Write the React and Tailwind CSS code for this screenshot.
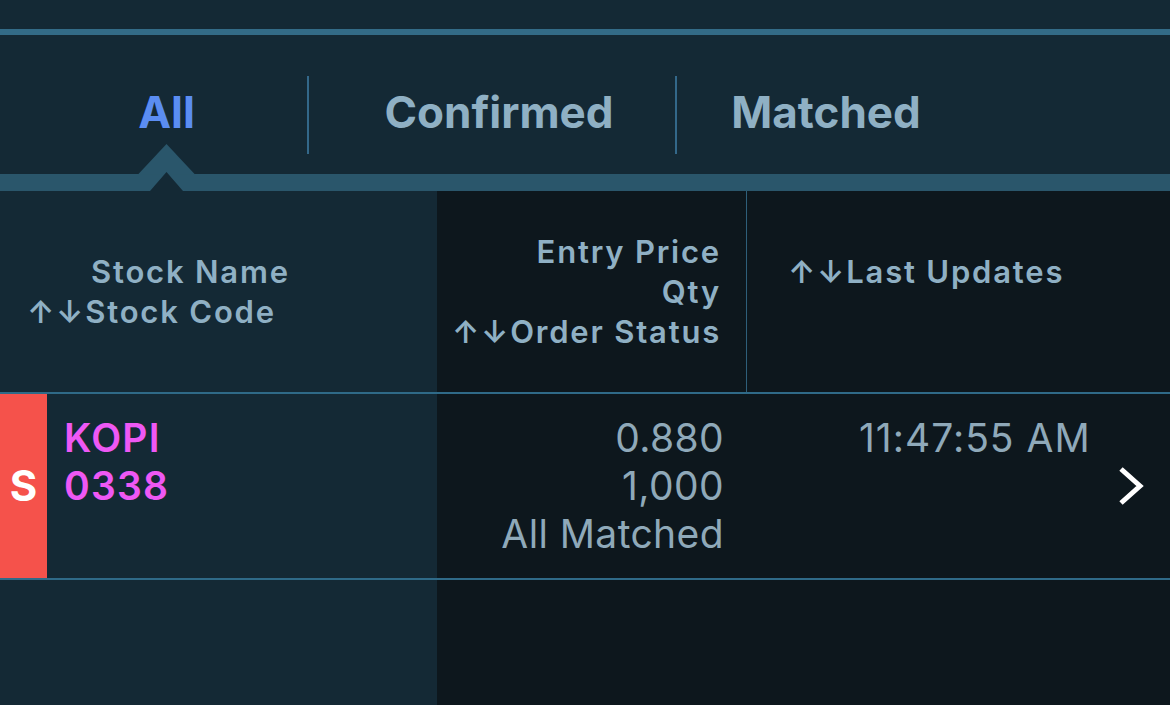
// Order list screen: tabs, column header, one order row
const font = { fontFamily: 'Inter, "Liberation Sans", "DejaVu Sans", sans-serif' };

const Tab = ({ label, active, className }) => (
  <div className={`flex justify-center pt-[55px] ${className}`}>
    <span
      className={`text-[44px] font-bold leading-[44px] ${
        active ? 'text-[#5b8df2]' : 'text-[#8fb0c4]'
      }`}
    >
      {label}
    </span>
  </div>
);

const Divider = () => <div className="mt-[41px] h-[78px] w-[2px] bg-[#33688a]" />;

export default function App() {
  return (
    <div className="w-[1170px] h-[705px] overflow-hidden bg-[#142935]" style={font}>
      <div className="h-[29px]" />
      <div className="h-[6px] bg-[#336b87]" />

      {/* Tabs */}
      <div className="flex h-[139px]">
        <Tab label="All" active className="w-[307px] pl-[26px]" />
        <Divider />
        <Tab label="Confirmed" className="w-[366px] pl-[14px]" />
        <Divider />
        <Tab label="Matched" className="w-[298px]" />
      </div>

      {/* Underline bar with notch */}
      <div className="relative h-[17px] bg-[#2a566b]">
        <svg
          className="absolute left-[130px] top-[-30px]"
          width="74"
          height="47"
          viewBox="130 144 74 47"
        >
          <polygon points="138,174.5 166.5,144 195,174.5" fill="#2a566b" />
          <polygon points="150,191 166.5,172 183,191" fill="#142935" />
        </svg>
      </div>

      {/* Header row */}
      <div className="flex h-[201px] text-[31px] font-semibold leading-[40px] text-[#8fb0c4] tracking-[1.8px]">
        <div className="w-[437px] flex flex-col justify-center">
          <div className="pl-[91px]">Stock Name</div>
          <div className="pl-[27px]">↑↓Stock Code</div>
        </div>
        <div className="w-[310px] bg-[#0d171d] border-r border-[#2e5f7a] flex flex-col justify-center items-end pr-[25px]">
          <div>Entry Price</div>
          <div>Qty</div>
          <div>↑↓Order Status</div>
        </div>
        <div className="flex-1 bg-[#0d171d] pt-[61px] pl-[41px]">↑↓Last Updates</div>
      </div>

      <div className="h-[2px] bg-[#2f6a88]" />

      {/* Order row */}
      <div className="flex h-[184px] text-[39px] leading-[48px]">
        <div className="w-[437px] flex">
          <div className="w-[47px] bg-[#f5524b] flex items-center justify-center">
            <span className="text-[42px] font-bold text-white">S</span>
          </div>
          <div className="pl-[17px] pt-[20px] font-semibold text-[#ee58f4] tracking-[1.2px]">
            <div>KOPI</div>
            <div>0338</div>
          </div>
        </div>
        <div className="w-[310px] bg-[#0d171d] flex flex-col items-end pr-[23px] pt-[20px] text-[#8fa9b9] tracking-[0.4px]">
          <div>0.880</div>
          <div>1,000</div>
          <div>All Matched</div>
        </div>
        <div className="flex-1 bg-[#0d171d] flex">
          <div className="pl-[112px] pt-[20px] text-[#8fa9b9] tracking-[1px]">11:47:55 AM</div>
          <svg className="ml-auto mr-[25px] self-center" width="28" height="40" viewBox="0 0 28 40">
            <polyline points="4,3 23,20 4,37" fill="none" stroke="white" strokeWidth="5" />
          </svg>
        </div>
      </div>

      <div className="h-[2px] bg-[#2f6a88]" />

      <div className="flex h-[200px]">
        <div className="w-[437px]" />
        <div className="flex-1 bg-[#0d171d]" />
      </div>
    </div>
  );
}
